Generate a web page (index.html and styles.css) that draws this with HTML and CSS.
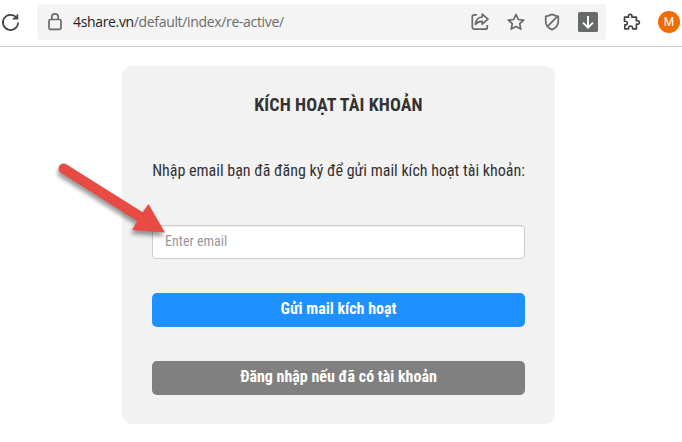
FILE: index.html
```
<!DOCTYPE html>
<html lang="vi">
<head>
<meta charset="utf-8">
<title>4share.vn</title>
<link rel="stylesheet" href="styles.css">
</head>
<body>
<header class="toolbar">
  <svg class="reload" width="20" height="20" viewBox="0 0 20 20"><path d="M16.400 5.600A7.600 7.600 0 1 0 18.100 10.500M17.400 2.200v4.400h-4.600"/></svg>
  <div class="address">
    <svg class="lock" width="16" height="20" viewBox="0 0 16 20"><rect x="2" y="7.500" width="12" height="9.800" rx="1.500"/><path d="M4.800 7.500V5a3.200 3.200 0 0 1 6.400 0v2.500"/></svg>
    <span class="url"><b>4share.vn</b>/default/index/re-active/</span>
    <div class="actions">
      <svg width="20" height="20" viewBox="0 0 20 20"><path d="M7 2.800H4.300a2 2 0 0 0-2 2v10.400a2 2 0 0 0 2 2h11a2 2 0 0 0 2-2V13"/><path d="M12.200 2.200 18 7.200l-5.800 5V9.400c-3-.1-4.800.7-6.800 3C5.700 8 8 5.400 12.200 5Z"/></svg>
      <svg width="20" height="20" viewBox="0 0 20 20"><path d="m10 2.500 2.300 5 5.400.6-4 3.600 1.100 5.400-4.800-2.700-4.800 2.700 1.100-5.400-4-3.600 5.400-.6Z"/></svg>
      <svg width="20" height="20" viewBox="0 0 20 20"><path d="M10 2.300c2 1.300 4 1.900 6.300 2v5c0 4-2.300 6.700-6.300 8.300-4-1.600-6.300-4.300-6.300-8.300v-5C6 4.200 8 3.600 10 2.300ZM15.300 4.300 5.400 14.600"/></svg>
      <svg class="download" width="20" height="20" viewBox="0 0 20 20"><rect width="20" height="20" rx="1.500"/><path d="M10 4v11.500M5 10.700l5 5 5-5"/></svg>
    </div>
  </div>
  <svg class="puzzle" width="20" height="20" viewBox="0 0 20 20"><path d="M2.500 5.200h4C6 3.400 6.900 2.400 8.200 2.400s2.200 1 1.700 2.800h4.500v3.700c1.800-.5 3 .3 3 1.600s-1.200 2.100-3 1.600v4.700h-3.800c.3-1.700-.7-2.700-2.100-2.700s-2.300 1-2 2.700H2.800v-3.900c1.700.3 2.600-.5 2.600-1.800S4.400 9 2.500 9.300Z"/></svg>
  <div class="avatar">M</div>
</header>
<main class="card">
  <h1>KÍCH HOẠT TÀI KHOẢN</h1>
  <p>Nhập email bạn đã đăng ký để gửi mail kích hoạt tài khoản:</p>
  <input type="email" placeholder="Enter email">
  <button class="send">Gửi mail kích hoạt</button>
  <button class="login">Đăng nhập nếu đã có tài khoản</button>
</main>
<svg class="pointer" width="130" height="100" viewBox="0 0 130 100"><path d="M18.300 9.200 94.700 57.300 100.500 49 117 77.500 84 75 89.300 66 12.800 17.800C7.500 14 12.500 6 18.300 9.200Z"/></svg>
</body>
</html>
```
FILE: styles.css
```
* { box-sizing: border-box; }
body { margin: 0; height: 442px; overflow: hidden; background: #fff; font-family: "Roboto Condensed", Roboto, sans-serif; font-stretch: 75%; color: #333; }
svg { display: block; flex: none; fill: none; stroke: #666a69; stroke-width: 1.7; stroke-linejoin: round; }
.toolbar { height: 47px; border-bottom: 1px solid #ccc; display: flex; align-items: flex-start; }
.reload { margin: 12px 0 0; stroke: #444; stroke-width: 1.7; stroke-linejoin: miter; }
.address { margin: 4px 0 0 17px; width: 569px; height: 36px; border-radius: 4px; background: #f4f4f4; display: flex; align-items: center; padding: 0 8px 0 10px; }
.url { margin-left: 10px; font: 14px/20px "Open Sans", sans-serif; color: #6b6b6b; letter-spacing: -.34px; white-space: nowrap; }
.url b { font-weight: 400; color: #222; }
.actions { margin-left: auto; display: flex; gap: 16px; }
.download rect { fill: #666a69; stroke: none; }
.download path { stroke: #fff; stroke-width: 1.9; stroke-linejoin: miter; }
.puzzle { margin: 12px 0 0 16px; stroke: #444; stroke-width: 1.7; }
.avatar { margin: 11px 0 0 16px; width: 22px; height: 22px; border-radius: 50%; background: #ef6c00; color: #fff; font: 12px/22px Roboto, sans-serif; text-align: center; }
.card { margin: 19px 0 0 122px; width: 433px; height: 358px; border-radius: 10px; background: #f2f2f2; padding: 27px 30px 0; display: flex; flex-direction: column; }
h1, p { margin: 0; text-align: center; white-space: nowrap; }
h1 { font-size: 18px; line-height: 24px; font-weight: 700; letter-spacing: .1px; }
p { margin-top: 42px; font-size: 16px; line-height: 24px; }
input { margin-top: 42px; height: 34px; padding: 0 12px 2px; border: 1px solid #ccc; border-radius: 4px; background: #fff; font: inherit; font-size: 14px; box-shadow: inset 0 1px 1px rgba(0,0,0,.075); }
input::placeholder { color: #999; }
button { margin-top: 34px; height: 34px; padding: 0 0 4px; border: 0; border-radius: 5px; color: #fff; font: inherit; font-size: 16px; font-weight: 700; }
.send { background: #1e90ff; }
.login { background: #808080; }
.pointer { position: absolute; left: 48px; top: 155px; filter: drop-shadow(-1px 4px 2px rgba(0,0,0,.4)); }
.pointer path { fill: #e84b43; stroke: none; }
```
